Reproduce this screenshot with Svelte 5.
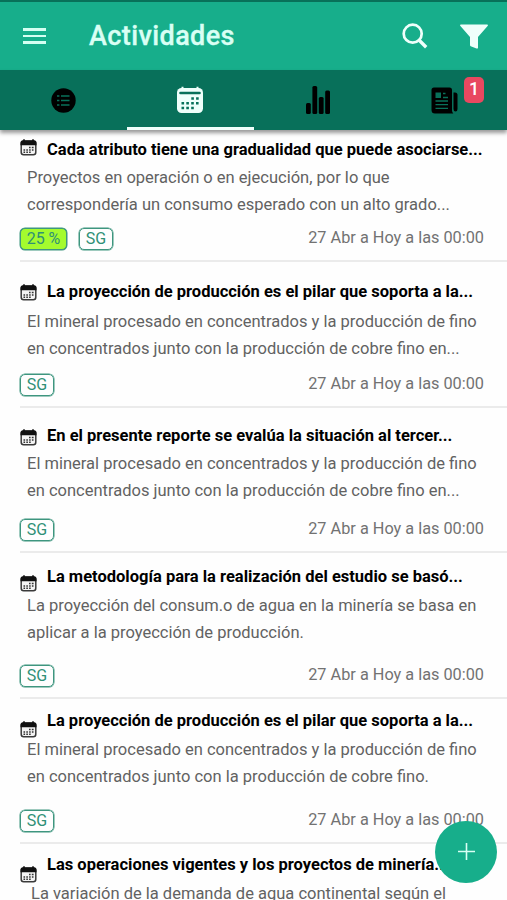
<script lang="ts">
    const tabs = ['list', 'calendar', 'stats', 'news'];
    let active = 'calendar';

    const activities = [
        {
            title: 'Cada atributo tiene una gradualidad que puede asociarse...',
            lines: ['Proyectos en operación o en ejecución, por lo que', 'correspondería un consumo esperado con un alto grado...'],
            progress: '25 %', height: 132, icon: 9, top: 10, gap: 5
        },
        {
            title: 'La proyección de producción es el pilar que soporta a la...',
            lines: ['El mineral procesado en concentrados y la producción de fino', 'en concentrados junto con la producción de cobre fino en...'],
            height: 146, icon: 22, top: 20, gap: 7
        },
        {
            title: 'En el presente reporte se evalúa la situación al tercer...',
            lines: ['El mineral procesado en concentrados y la producción de fino', 'en concentrados junto con la producción de cobre fino en...'],
            height: 145, icon: 21, top: 18, gap: 5
        },
        {
            title: 'La metodología para la realización del estudio se basó...',
            lines: ['La proyección del consum.o de agua en la minería se basa en', 'aplicar a la proyección de producción.'],
            height: 146, icon: 22, top: 14, gap: 6
        },
        {
            title: 'La proyección de producción es el pilar que soporta a la...',
            lines: ['El mineral procesado en concentrados y la producción de fino', 'en concentrados junto con la producción de cobre fino.'],
            height: 145, icon: 22, top: 12, gap: 6
        },
        {
            title: 'Las operaciones vigentes y los proyectos de minería...',
            lines: ['La variación de la demanda de agua continental según el'],
            height: 146, icon: 22, top: 11, gap: 6, indent: 4
        }
    ];
</script>

<div class="screen">
    <header>
        <button class="menu" aria-label="Menú">
            <span></span><span></span><span></span>
        </button>
        <h1>Actividades</h1>
        <button class="search" aria-label="Buscar">
            <svg width="26" height="26" viewBox="0 0 26 26">
                <circle cx="10.7" cy="10.7" r="9" fill="none" stroke="currentColor" stroke-width="2.7" />
                <path d="M17.2 17.2 24.2 24.2" stroke="currentColor" stroke-width="3.4" />
            </svg>
        </button>
        <button class="filter" aria-label="Filtrar">
            <svg width="28" height="25" viewBox="0 0 28 25">
                <path d="M.8.5h26.4c.8 0 .9.8.4 1.4L18 13v10.7c0 .9-.8 1-1.5.7l-5.8-2.2c-.5-.3-.7-.6-.7-1.1V13L.4 1.9C-.1 1.3 0 .5.8.5z" fill="currentColor" />
            </svg>
        </button>
    </header>

    <nav>
        {#each tabs as tab}
            <button class="tab" class:active={active === tab} aria-label={tab} on:click={() => (active = tab)}>
                {#if tab === 'list'}
                    <svg width="25" height="25" viewBox="0 0 25 25">
                        <circle cx="12.5" cy="12.5" r="12.2" />
                        <path class="cut" d="M6 8h2.4M10 8h8.5M6 12.5h2.4M10 12.5h8.5M6 17h2.4M10 17h8.5" stroke-width="1.6" />
                    </svg>
                {:else if tab === 'calendar'}
                    <svg width="28" height="28" viewBox="0 0 28 28">
                        <rect x="1" y="2" width="26" height="25" rx="4.5" />
                        <path d="M6.500 .8v4M21.500 .8v4" stroke="currentColor" stroke-width="2" />
                        <path class="cut" d="M4.500 7h19" stroke-width="2.6" stroke-linecap="round" />
                        <path class="cut" d="M15.300 12.500h2.600m2.200 0h2.600M5.500 17.200h2.600m2.200 0h2.600m2.300 0h2.600m2.200 0h2.600M5.500 22h2.600m2.200 0h2.600m2.300 0h2.600" stroke-width="2.6" />
                    </svg>
                {:else if tab === 'stats'}
                    <svg class="stats" width="26" height="28" viewBox="0 0 26 28">
                        <rect x="1" y="17" width="4.800" height="11" rx="1.500" />
                        <rect x="7.400" y="0" width="4.800" height="28" rx="1.500" />
                        <rect x="13.800" y="11" width="4.800" height="17" rx="1.500" />
                        <rect x="20.200" y="4.500" width="4.800" height="23.500" rx="1.500" />
                    </svg>
                {:else}
                    <svg class="news" width="27" height="27" viewBox="0 0 27 27">
                        <path d="M3 .5h15.500q2.500 0 2.500 2.500v20.500q0 1.500 1.300 3H4Q.5 26.500.5 23V3Q.5.500 3 .500z" />
                        <path d="M22.500 5.500h1.500q2.500 0 2.500 2.500v14q0 2.500-2 2.500t-2-2.500z" />
                        <rect class="page-photo" x="4.500" y="5.500" width="5.500" height="5.500" />
                        <path class="cut" d="M12 6.500h2.500M12 10.500h5M4.500 14h12.500M4.500 17.700h12.500M4.500 21.300h12.500" stroke-width="1.300" />
                    </svg>
                    <span class="badge">1</span>
                {/if}
            </button>
        {/each}
    </nav>

    <main>
        {#each activities as item}
            <article style="--height: {item.height}px; --icon: {item.icon}px; --top: {item.top}px; --gap: {item.gap}px; --indent: {item.indent || 0}px">
                <div class="body">
                    <svg class="day" width="17" height="17" viewBox="0 0 17 17">
                        <rect x="1.200" y="2.200" width="14.600" height="13.600" rx="2.500" fill="#f4f4f4" stroke="#3a3a3a" stroke-width="1.500" />
                        <path d="M.5 6.300V4Q.5 1.300 3 1.300h11q2.500 0 2.500 2.700v2.300z" fill="#111" />
                        <path d="M4 .3v3M13 .3v3" stroke="#111" stroke-width="1.600" />
                        <path d="M9 8.500h1.600m1.200 0h1.800M3.500 11h1.600m1.200 0h1.600m1.200 0h1.600m1.200 0h1.600M3.500 13.300h1.600m1.200 0h1.600m1.200 0h1.600" stroke="#333" stroke-width="1.600" />
                    </svg>
                    <div class="text">
                        <h2>{item.title}</h2>
                        <p>
                            {#each item.lines as line}
                                <span>{line}</span>
                            {/each}
                        </p>
                    </div>
                </div>
                <footer>
                    {#if item.progress}
                        <span class="tag progress">{item.progress}</span>
                    {/if}
                    <span class="tag">SG</span>
                    <time>27 Abr a Hoy a las 00:00</time>
                </footer>
            </article>
        {/each}
    </main>

    <button class="add" aria-label="Agregar">
        <svg width="17" height="17" viewBox="0 0 17 17">
            <path d="M8.500 0v17M0 8.500h17" stroke="currentColor" stroke-width="1.600" />
        </svg>
    </button>
</div>

<style>
    :global(body) {
        margin: 0;
        background: #fefefe;
    }
    .screen {
        position: relative;
        display: flex;
        flex-direction: column;
        width: 507px;
        height: 900px;
        overflow: hidden;
        background: #fefefe;
        font-family: Roboto, "Liberation Sans", sans-serif;
    }
    button {
        display: flex;
        padding: 0;
        border: 0;
        background: none;
        color: inherit;
        font: inherit;
    }
    header {
        display: flex;
        align-items: center;
        flex: none;
        box-sizing: border-box;
        height: 70px;
        padding: 0 18px 0 23px;
        border-top: 2px solid #087159;
        background: #17ae8b;
        color: #effffb;
    }
    .menu {
        flex-direction: column;
        gap: 4px;
        width: 23px;
    }
    .menu span {
        height: 2.600px;
        background: #d5fff2;
    }
    h1 {
        flex: 1;
        margin: 0 0 0 43px;
        color: #d9fff4;
        font-size: 27px;
        font-weight: 500;
        letter-spacing: .4px;
        line-height: 32px;
        -webkit-text-stroke: .35px #d9fff4;
    }
    .filter {
        margin-left: 32px;
        margin-right: 1px;
    }
    nav {
        position: relative;
        z-index: 1;
        display: grid;
        grid-template-columns: repeat(4, 1fr);
        flex: none;
        height: 60px;
        background: #08705a;
        box-shadow: 0 3px 4px rgba(0, 0, 0, .4);
    }
    .tab {
        position: relative;
        align-items: center;
        justify-content: center;
        box-sizing: border-box;
        border-bottom: 3px solid transparent;
        padding-top: 3px;
        color: #000;
    }
    .tab.active {
        border-bottom-color: #effffb;
        color: #effffb;
    }
    .tab svg {
        fill: currentColor;
    }
    .tab .stats,
    .tab .news {
        margin-left: 2px;
    }
    .tab .cut {
        fill: none;
        stroke: #08705a;
    }
    .tab .page-photo {
        fill: #08705a;
    }
    .badge {
        position: absolute;
        top: 7px;
        right: 23px;
        width: 20px;
        height: 26px;
        border-radius: 5px;
        background: #e84860;
        color: #fff;
        font-size: 18px;
        font-weight: 500;
        line-height: 23px;
        text-align: center;
    }
    main {
        flex: 1;
        min-height: 0;
        overflow: hidden;
    }
    article {
        display: flex;
        flex-direction: column;
        justify-content: space-between;
        box-sizing: border-box;
        height: var(--height);
        margin-left: 20px;
        border-bottom: 2px solid #ebebeb;
    }
    .body {
        display: flex;
        align-items: flex-start;
    }
    .day {
        flex: none;
        margin-top: var(--icon);
    }
    .text {
        padding-top: var(--top);
        white-space: nowrap;
    }
    h2 {
        margin: 0 0 0 10px;
        color: #000;
        font-size: 16.500px;
        font-weight: 700;
        line-height: 20px;
    }
    p {
        margin: var(--gap) 0 0 calc(-10px + var(--indent));
        color: #626262;
        font-size: 16.500px;
        line-height: 26.500px;
    }
    p span {
        display: block;
    }
    footer {
        display: flex;
        align-items: center;
        gap: 12px;
        height: 22px;
        padding: 0 23px 10px 0;
    }
    .tag {
        box-sizing: border-box;
        width: 34px;
        height: 22px;
        border: 1.500px solid #3e967f;
        border-radius: 5px;
        box-shadow: 0 0 0 .500px #3e967f;
        color: #2f9076;
        font-size: 16px;
        line-height: 20px;
        text-align: center;
    }
    .tag.progress {
        width: 47px;
        background: #a4fb2e;
    }
    time {
        margin-left: auto;
        color: #727272;
        font-size: 16.300px;
        line-height: 20px;
        transform: translateY(-1px);
    }
    .add {
        position: absolute;
        right: 10px;
        bottom: 17.500px;
        z-index: 2;
        align-items: center;
        justify-content: center;
        width: 62px;
        height: 62px;
        border-radius: 50%;
        background: #17ae8b;
        color: #d9fff4;
    }
</style>
